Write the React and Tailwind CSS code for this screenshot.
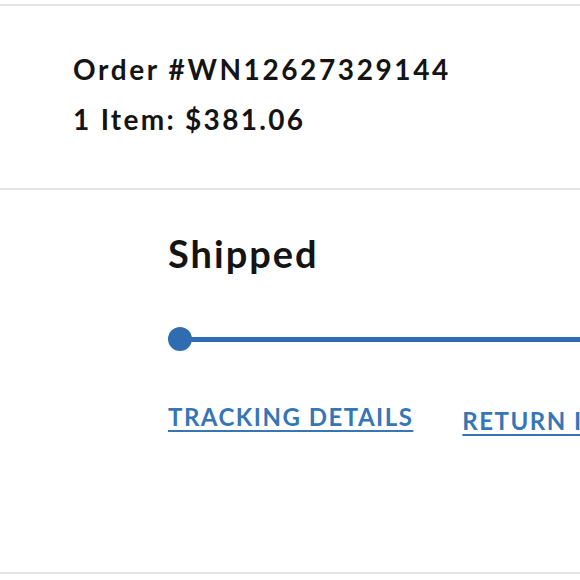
export default function App() {
  return (
    <div className="w-[580px] h-[580px] bg-white overflow-hidden pt-[4px] font-['Lato','Liberation_Sans',sans-serif]">
      <div className="border-t-2 border-b-2 border-[#e4e4e4]">
        {/* Order summary */}
        <div className="h-[182px] pl-[73px] pt-[38px] text-[#141414]">
          <p className="text-[28px] font-bold leading-[50px] tracking-[2.6px]">Order #WN12627329144</p>
          <p className="text-[28px] font-bold leading-[50px] tracking-[2.3px]">1 Item: $381.06</p>
        </div>

        {/* Status */}
        <div className="h-[384px] border-t-2 border-[#e4e4e4] pl-[168px] pt-[39px]">
          <h2 className="text-[38px] font-bold leading-[48px] tracking-[2px] text-[#141414]">Shipped</h2>

          <div className="mt-[50px] h-[24px] flex items-center">
            <div className="w-[24px] h-[24px] rounded-full bg-[#2f6db0] shrink-0" />
            <div className="-ml-[4px] h-[5px] flex-1 bg-[#2f6db0]" />
          </div>

          <div className="mt-[48px] flex items-start gap-[49px] text-[#3676b6] text-[24px] font-bold uppercase tracking-[1.5px] whitespace-nowrap">
            <a href="#" className="underline underline-offset-[4px] decoration-2">Tracking Details</a>
            <a href="#" className="mt-[4px] underline underline-offset-[4px] decoration-2">Return Items</a>
          </div>
        </div>
      </div>
    </div>
  )
}
